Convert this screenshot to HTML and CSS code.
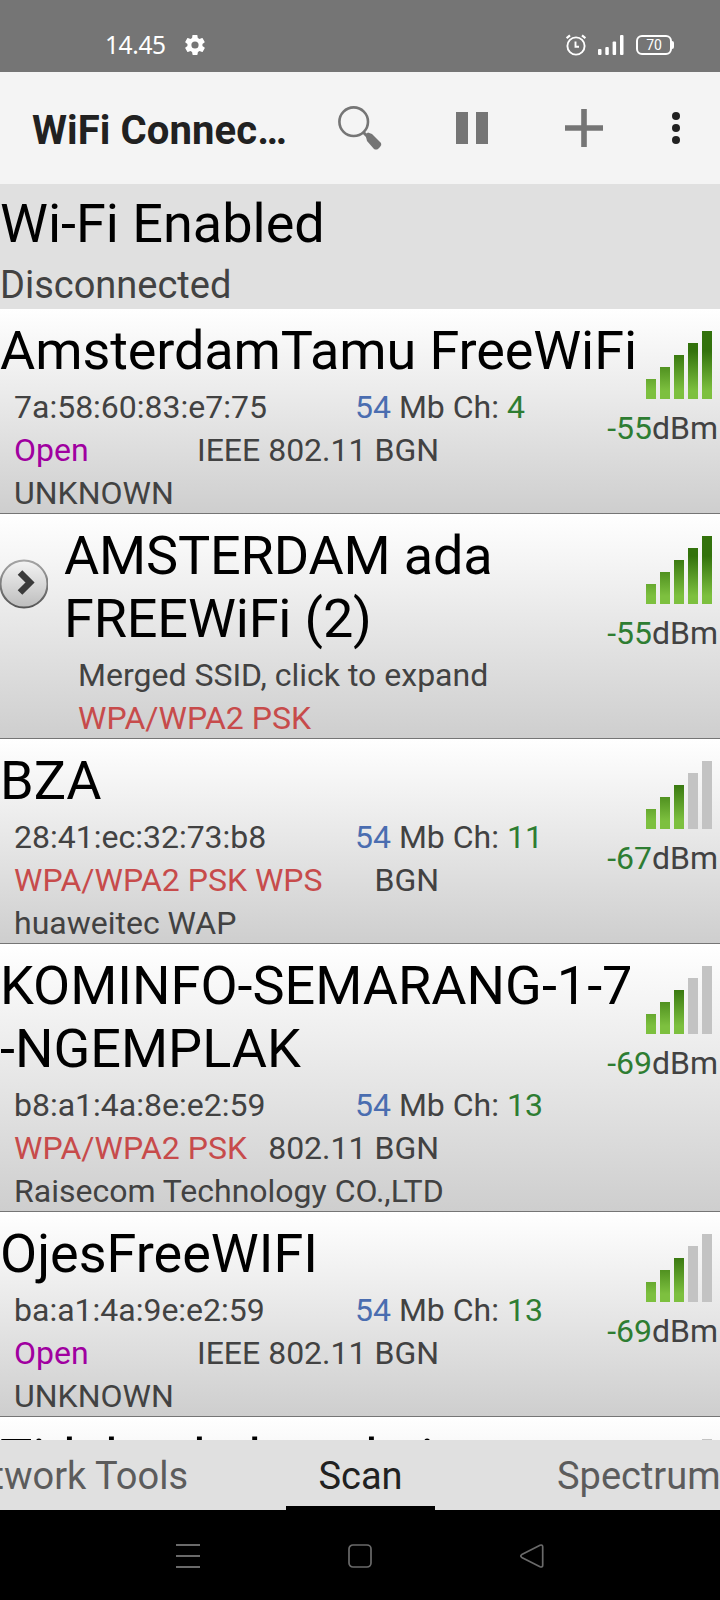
FILE: index.html
```html
<!DOCTYPE html>
<html lang="en">
<head>
  <meta charset="UTF-8">
  <title>WiFi Connection Manager</title>
  <link rel="stylesheet" href="styles.css">
</head>
<body>

  <div class="status-bar">
    <span class="clock">14.45</span>
    <svg class="gear" width="20" height="20" viewBox="2 2 20 20"><path fill="#fff" d="M19.4 13c0-.3.1-.6.1-1s0-.7-.1-1l2.1-1.6c.2-.2.2-.4.1-.6l-2-3.5c-.1-.2-.4-.3-.6-.2l-2.5 1c-.5-.4-1.1-.7-1.7-1L14.4 2.4c0-.2-.2-.4-.5-.4h-4c-.2 0-.5.2-.5.4L9.1 5.1c-.6.2-1.2.6-1.7 1l-2.5-1c-.2-.1-.5 0-.6.2l-2 3.5c-.1.2-.1.5.1.6L4.5 11c0 .3-.1.7-.1 1s0 .7.1 1l-2.1 1.6c-.2.2-.2.4-.1.6l2 3.5c.1.2.4.3.6.2l2.5-1c.5.4 1.1.7 1.7 1l.4 2.7c0 .2.2.4.5.4h4c.2 0 .5-.2.5-.4l.4-2.7c.6-.2 1.2-.6 1.7-1l2.5 1c.2.1.5 0 .6-.2l2-3.5c.1-.2.1-.5-.1-.6zM12 15.6a3.6 3.6 0 1 1 0-7.2 3.6 3.6 0 0 1 0 7.2z"/></svg>
    <div class="status-icons">
      <svg width="20" height="22" viewBox="0 0 20 22" fill="none" stroke="#fff" stroke-width="1.9"><circle cx="10" cy="12" r="8.6"/><path d="M.6 4.2L4 1.3M19.4 4.2L16 1.3" stroke-width="2.2"/><path d="M9.5 7.500v5.300h3.500"/></svg>
      <svg width="26" height="20" viewBox="0 0 26 20" fill="#fff"><rect y="14" width="3.5" height="6" rx="1"/><rect x="7.3" y="12" width="3.5" height="8" rx="1"/><rect x="14.6" y="6.5" width="3.5" height="13.5" rx="1"/><rect x="22" width="3.5" height="20" rx="1"/></svg>
      <div class="battery">70</div>
    </div>
  </div>

  <div class="app-bar">
    <h1>WiFi Connec…</h1>
    <svg class="search" width="44" height="44" viewBox="0 0 44 44"><circle cx="15.7" cy="15.7" r="14.3" fill="none" stroke="#757575" stroke-width="2.6"/><path d="M25 26l5 5" stroke="#757575" stroke-width="3"/><path fill="#757575" d="M28 31v-3l2-1.500 4 1.500 9 9q1 2-1 4l-2 2q-2 1-4 0l-7-8z"/></svg>
    <svg class="pause" width="32" height="32" viewBox="0 0 32 32" fill="#757575"><path d="M0 0h12v32H0zM20 0h12v32H20z"/></svg>
    <svg class="plus" width="38" height="38" viewBox="0 0 38 38" fill="#757575"><path d="M16.200 0h5.600v16.200H38v5.600H21.800V38h-5.600V21.800H0v-5.600h16.200z"/></svg>
    <svg class="more" width="8" height="32" viewBox="0 0 8 32" fill="#212121"><circle cx="4" cy="4" r="4"/><circle cx="4" cy="16" r="4"/><circle cx="4" cy="28" r="4"/></svg>
  </div>

  <div class="wifi-state">
    <div class="state">Wi-Fi Enabled</div>
    <div class="connection">Disconnected</div>
  </div>

  <div class="networks" id="networks"></div>

  <div class="tabs">
    <div class="tab tab-left">Network Tools</div>
    <div class="tab active">Scan</div>
    <div class="tab tab-right">Spectrum</div>
  </div>

  <div class="nav-bar">
    <svg width="24" height="24" viewBox="0 0 24 24"><path d="M0 1h24M0 12h24M0 23h24" stroke="#6a6a6a" stroke-width="2"/></svg>
    <svg width="24" height="24" viewBox="0 0 24 24"><rect x="1" y="1" width="22" height="22" rx="4" fill="none" stroke="#6a6a6a" stroke-width="1.7"/></svg>
    <svg width="24" height="24" viewBox="0 0 24 24"><path d="M1.800 10.600L20 1.200q2.700-.8 2.700 1.600v18.400q0 2.400-2.700 1.600L1.800 13.400q-2-1.400 0-2.800z" fill="none" stroke="#6a6a6a" stroke-width="1.7"/></svg>
  </div>

  <script>
    const networks = [
      { ssid: 'AmsterdamTamu FreeWiFi', mac: '7a:58:60:83:e7:75', ch: 4, sec: 'Open', mode: 'IEEE 802.11 BGN', vendor: 'UNKNOWN', level: 5, dbm: -55 },
      { ssid: 'AMSTERDAM ada FREEWiFi (2)', merged: true, sec: 'WPA/WPA2 PSK', level: 5, dbm: -55 },
      { ssid: 'BZA', mac: '28:41:ec:32:73:b8', ch: 11, sec: 'WPA/WPA2 PSK WPS', mode: 'BGN', vendor: 'huaweitec WAP', level: 3, dbm: -67 },
      { ssid: 'KOMINFO-SEMARANG-1-7<br>-NGEMPLAK', mac: 'b8:a1:4a:8e:e2:59', ch: 13, sec: 'WPA/WPA2 PSK', mode: '802.11 BGN', vendor: 'Raisecom Technology CO.,LTD', level: 3, dbm: -69 },
      { ssid: 'OjesFreeWIFI', mac: 'ba:a1:4a:9e:e2:59', ch: 13, sec: 'Open', mode: 'IEEE 802.11 BGN', vendor: 'UNKNOWN', level: 3, dbm: -69 },
      { ssid: 'Tidak ada koneksi', level: 2 } // only its top edge shows above the tabs
    ];

    function signalIcon(level) {
      let bars = '';
      for (let i = 0; i < 5; i++) {
        const h = 20 + i * 12;
        bars += `<rect x="${i * 14}" y="${68 - h}" width="10" height="${h}" fill="${i < level ? 'url(#green)' : '#c3c3c3'}"/>`;
      }
      return `<svg width="66" height="68" viewBox="0 0 66 68">${bars}</svg>`;
    }

    const arrow = `<svg class="expand" width="48" height="50" viewBox="0 0 48 50">
      <circle cx="24" cy="25" r="23.5" fill="url(#knob)" stroke="url(#rim)" stroke-width="2"/>
      <path d="M20 13.500L30 23.500 20 33.500" fill="none" stroke="#3a3a3a" stroke-width="6.5"/>
    </svg>`;

    function details(n) {
      if (!n.sec) return '';
      const security = `<span class="${n.sec === 'Open' ? 'open' : 'secured'}">${n.sec}</span>`;
      if (n.merged) {
        return `<div class="details"><div>Merged SSID, click to expand</div><div>${security}</div></div>`;
      }
      return `
        <div class="details">
          <div class="line"><span class="mac">${n.mac}</span><span><b class="rate">54</b> Mb Ch: <b class="green">${n.ch}</b></span></div>
          <div class="line second">${security}<span>${n.mode}</span></div>
          <div>${n.vendor}</div>
        </div>`;
    }

    document.getElementById('networks').innerHTML = `
      <svg class="defs" width="0" height="0">
        <linearGradient id="green" gradientUnits="userSpaceOnUse" x1="0" y1="20" x2="0" y2="60">
          <stop offset="0" stop-color="#33720c"/><stop offset="1" stop-color="#7dc03f"/>
        </linearGradient>
        <linearGradient id="knob" x1="0" y1="0" x2="0" y2="1">
          <stop offset="0" stop-color="#f4f4f4"/><stop offset="1" stop-color="#bdbdbd"/>
        </linearGradient>
        <linearGradient id="rim" x1="0" y1="0" x2="0" y2="1">
          <stop offset="0" stop-color="#a5a5a5"/><stop offset="1" stop-color="#555"/>
        </linearGradient>
      </svg>` + networks.map(n => `
      <div class="network">
        ${n.merged ? arrow : ''}
        <div class="info">
          <div class="ssid">${n.ssid}</div>
          ${details(n)}
        </div>
        <div class="signal">${signalIcon(n.level)}${n.dbm ? `<div><b class="green">${n.dbm}</b>dBm</div>` : ''}</div>
      </div>`).join('');
  </script>
</body>
</html>
```
FILE: styles.css
```css
* {
  box-sizing: border-box;
}
body {
  margin: 0;
  width: 720px;
  height: 1600px;
  display: flex;
  flex-direction: column;
  overflow: hidden;
  font-family: Roboto, sans-serif;
  background: #000;
  color: #424242;
}
svg {
  display: block;
  flex-shrink: 0;
}
b {
  font-weight: normal;
}
.status-bar {
  height: 72px;
  flex-shrink: 0;
  display: flex;
  align-items: center;
  padding: 18px 48px 0 105px;
  background: #757575;
  color: #fff;
}
.clock {
  width: 80px;
  margin-top: -2px;
  font-family: "Noto Sans", sans-serif;
  font-size: 24.5px;
  letter-spacing: -0.4px;
}
.status-icons {
  margin-left: auto;
  display: flex;
  align-items: center;
  gap: 12px;
}
.battery {
  position: relative;
  width: 36px;
  height: 20px;
  border: 2px solid #fff;
  border-radius: 6px;
  font-size: 14px;
  line-height: 17px;
  text-align: center;
}
.battery::after {
  content: '';
  position: absolute;
  right: -4px;
  top: 4px;
  width: 2px;
  height: 8px;
  border-radius: 0 2px 2px 0;
  background: #fff;
}
.app-bar {
  height: 112px;
  flex-shrink: 0;
  display: flex;
  align-items: center;
  padding-left: 32px;
  background: #f4f4f4;
}
h1 {
  margin: 4px 0 0;
  width: 306px;
  font-size: 40px;
  font-weight: bold;
  letter-spacing: 0.1px;
  color: #212121;
}
.pause {
  margin-left: 74px;
}
.plus {
  margin-left: 77px;
}
.more {
  margin-left: 69px;
}
.wifi-state {
  height: 125px;
  flex-shrink: 0;
  padding-top: 8px;
  background: #e0e0e0;
}
.state,
.ssid {
  font-size: 54px;
  line-height: 63px;
  color: #000;
}
.connection {
  font-size: 38px;
  line-height: 60px;
}
.networks {
  flex: 1;
  overflow: hidden;
}
.defs {
  position: absolute;
}
.network {
  display: flex;
  padding-top: 10px;
  border-bottom: 1px solid #757575;
  background: linear-gradient(#fff, #cecece);
}
.network:first-of-type .ssid {
  letter-spacing: -0.1px;
}
.network:last-child {
  height: 205px;
}
.expand {
  margin: 35px 16px 0 0;
}
.info {
  flex: 1;
  min-width: 0;
}
.ssid {
  white-space: nowrap;
}
.expand + .info {
  max-width: 470px;
}
.expand + .info .ssid {
  white-space: normal;
  letter-spacing: -0.15px;
}
.details {
  margin-bottom: -2px;
  padding: 4px 0 0 14px;
  font-size: 32px;
  line-height: 43px;
}
.line {
  display: flex;
}
.mac {
  width: 341px;
}
.second {
  width: 425px;
  justify-content: space-between;
}
.rate {
  color: #4a6db0;
}
.green {
  color: #2e7d32;
}
.open {
  color: #a000a0;
}
.secured {
  color: #c74b4b;
}
.signal {
  width: 120px;
  margin-left: auto;
  padding: 12px 2px 0 0;
  flex-shrink: 0;
  text-align: right;
  font-size: 32px;
  line-height: 40px;
}
.signal svg {
  margin: 0 6px 9px auto;
}
.tabs {
  height: 70px;
  flex-shrink: 0;
  display: flex;
  background: #e0e0e0;
  font-size: 38px;
  line-height: 73px;
  color: #5c5c5c;
}
.tab {
  white-space: nowrap;
}
.tab.active {
  width: 149px;
  margin: 0 122px 0 98px;
  border-bottom: 4px solid #000;
  text-align: center;
  color: #212121;
}
.tab-left {
  width: 188px;
  display: flex;
  justify-content: flex-end;
}
.tab-right {
  width: 163px;
}
.nav-bar {
  height: 90px;
  flex-shrink: 0;
  display: flex;
  justify-content: center;
  align-items: center;
  gap: 148px;
  padding-top: 2px;
}
```
